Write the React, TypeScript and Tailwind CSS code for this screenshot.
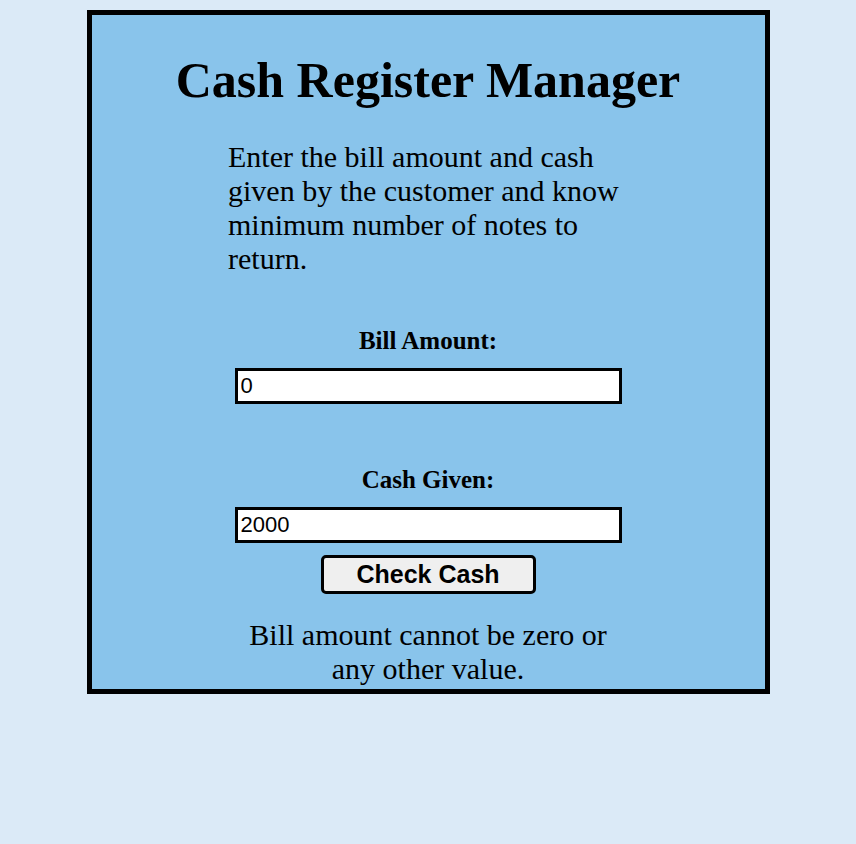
import React, { useState } from 'react';

const serif = { fontFamily: '"Liberation Serif", serif' };
const sans = { fontFamily: '"Liberation Sans", sans-serif' };

export default function App() {
  const [bill, setBill] = useState('0');
  const [cash, setCash] = useState('2000');

  return (
    <div className="min-h-[844px] bg-[#dbeaf7] pt-[10px]" style={serif}>
      <div className="mx-auto w-[683px] border-[5px] border-black bg-[#89c4eb] text-black">
        <h1 className="mt-[36px] text-center text-[50px] font-bold leading-[58px]">Cash Register Manager</h1>
        <p className="mx-auto mt-[31px] w-[400px] text-[30px] leading-[34px]">
          Enter the bill amount and cash given by the customer and know minimum number of notes to return.
        </p>
        <div className="mt-[51px] flex flex-col items-center">
          <label className="text-[25px] font-bold leading-[28px]">Bill Amount:</label>
          <input
            value={bill}
            onChange={(e) => setBill(e.target.value)}
            className="mt-[13px] h-[36px] w-[387px] border-[3px] border-black bg-white px-[3px] text-[22px] outline-none"
            style={sans}
          />
          <label className="mt-[62px] text-[25px] font-bold leading-[28px]">Cash Given:</label>
          <input
            value={cash}
            onChange={(e) => setCash(e.target.value)}
            className="mt-[13px] h-[36px] w-[387px] border-[3px] border-black bg-white px-[3px] text-[22px] outline-none"
            style={sans}
          />
          <button
            className="mt-[12px] h-[39px] w-[215px] rounded-[5px] border-[3px] border-black bg-[#efefef] text-[25px] font-bold leading-none"
            style={sans}
          >
            Check Cash
          </button>
          <p className="mt-[24px] w-[380px] pb-[3px] text-center text-[30px] leading-[34px]">
            Bill amount cannot be zero or any other value.
          </p>
        </div>
      </div>
    </div>
  );
}
